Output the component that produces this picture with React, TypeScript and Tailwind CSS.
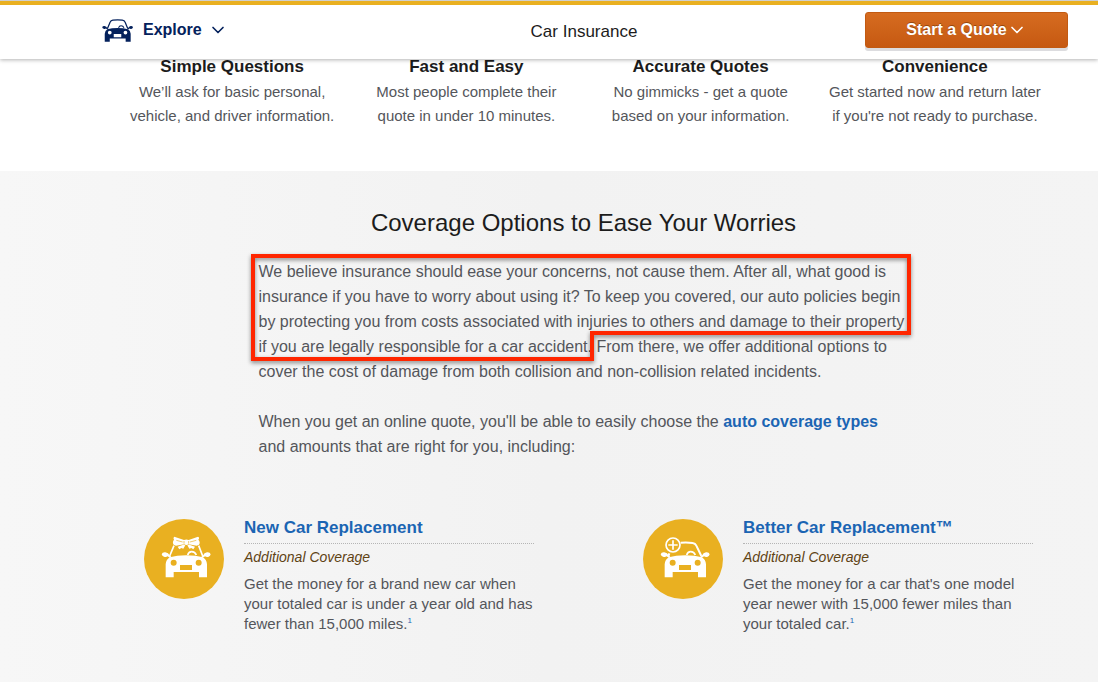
import { ChevronDown } from 'lucide-react';

const features = [
  {
    title: 'Simple Questions',
    lines: ['We’ll ask for basic personal,', 'vehicle, and driver information.'],
  },
  {
    title: 'Fast and Easy',
    lines: ['Most people complete their', 'quote in under 10 minutes.'],
  },
  {
    title: 'Accurate Quotes',
    lines: ['No gimmicks - get a quote', 'based on your information.'],
  },
  {
    title: 'Convenience',
    lines: ['Get started now and return later', "if you're not ready to purchase."],
  },
];

// Front of the car without the roof; lights and plate are cut out.
function CarFront() {
  return (
    <>
      <path
        fillRule="evenodd"
        fill="currentColor"
        d="M65 175V136Q66 121 78 115Q98 109 127 109Q156 109 176 115Q188 121 189 136V175H165V159H89V175ZM80 131a9 9 0 1 0 18 0a9 9 0 1 0 -18 0ZM155 131a9 9 0 1 0 18 0a9 9 0 1 0 -18 0ZM108 138V153H144V138Z"
      />
      <path
        fill="currentColor"
        d="M53 106Q55 99 64 100Q74 102 76 108L82 113L78 117L71 112Q66 115 60 113Q54 111 53 106ZM200 106Q198 99 189 100Q180 102 178 108L172 113L176 117L183 112Q188 115 194 113Q199 111 200 106Z"
      />
      <path
        fill="none"
        stroke="currentColor"
        strokeWidth="5"
        d="M131 108Q134 98 143 98Q153 98 157 108"
      />
    </>
  );
}

function ExploreCarIcon() {
  return (
    <svg viewBox="52 66 148 110" className="h-[23px] w-[31px]" aria-hidden="true">
      <CarFront />
      <path
        fill="none"
        stroke="currentColor"
        strokeWidth="6"
        d="M78 111L91 80Q94 72 104 71Q127 69 149 71Q159 72 162 80L175 111"
      />
    </svg>
  );
}

function BowCarIcon() {
  return (
    <svg viewBox="0 0 240 240" className="size-20 shrink-0 text-white" aria-hidden="true">
      <circle cx="120" cy="120" r="120" fill="#e9b021" />
      <CarFront />
      <path
        fill="none"
        stroke="currentColor"
        strokeWidth="5"
        d="M77 111L90 80M164 80L176 111"
      />
      <path
        fill="currentColor"
        d="M120 63L91 53Q86 56 90 62Q84 70 89 77L96 80L120 76Q127 80 134 76L158 80L165 77Q170 70 163 62Q168 56 162 53L134 63Q127 60 120 63ZM118 77L101 83L106 91L112 87L118 89L124 79ZM136 77L153 83L148 91L142 87L136 89L130 79Z"
      />
      <path
        fill="none"
        stroke="#e9b021"
        strokeWidth="2"
        d="M120 66V74M134 66V74M97 64L116 69M157 64L138 69"
      />
    </svg>
  );
}

function PlusCarIcon() {
  return (
    <svg viewBox="0 0 240 240" className="size-20 shrink-0 text-white" aria-hidden="true">
      <circle cx="120" cy="120" r="120" fill="#e9b021" />
      <CarFront />
      <g fill="none" stroke="currentColor">
        <circle cx="90" cy="78" r="21" strokeWidth="5" />
        <path strokeWidth="5" d="M90 64V92M76 78H104" />
        <path strokeWidth="6" d="M113 71Q133 69 149 72Q157 73 160 80L175 111M79 103L76 112" />
      </g>
    </svg>
  );
}

const coverages = [
  {
    title: 'New Car Replacement',
    icon: <BowCarIcon />,
    lines: [
      'Get the money for a brand new car when',
      'your totaled car is under a year old and has',
      'fewer than 15,000 miles.',
    ],
  },
  {
    title: 'Better Car Replacement™',
    icon: <PlusCarIcon />,
    lines: [
      "Get the money for a car that's one model",
      'year newer with 15,000 fewer miles than',
      'your totaled car.',
    ],
  },
];

function Header() {
  return (
    <header className="sticky top-0 z-10 border-t border-[#cfcfcf] bg-white shadow-[0_1px_4px_rgba(0,0,0,0.3)]">
      <div className="h-1 bg-[#e9b021]" />
      <div className="grid h-[54px] grid-cols-3 items-center pr-[30px] pl-[100px]">
        <button
          type="button"
          className="ml-0.5 flex items-center gap-[10px] justify-self-start pb-1 text-base font-bold text-[#04215c]"
        >
          <ExploreCarIcon />
          Explore
          <ChevronDown size={20} strokeWidth={2} className="-ml-1" />
        </button>
        <p className="text-center text-[17px] text-[#1c1c1c]">Car Insurance</p>
        <button
          type="button"
          className="mb-1 flex h-9 w-[203px] items-center justify-center justify-self-end rounded-[3px] border border-[#c25a12] bg-linear-to-b from-[#d66c20] to-[#c65911] text-base font-bold text-white shadow-[0_3px_0_#dcdcdf] text-shadow-[0_-1px_0_rgba(90,40,0,0.5)]"
        >
          Start a Quote
          <ChevronDown size={20} strokeWidth={2} />
        </button>
      </div>
    </header>
  );
}

function Features() {
  return (
    <section className="pr-[46px] pb-[43px] pl-[115px]">
      <div className="grid grid-cols-4 text-center">
        {features.map((f) => (
          <div key={f.title}>
            <h3 className="pb-[5px] text-[17px] leading-4 font-bold text-[#1c1c1c]">{f.title}</h3>
            <p className="text-[15px] leading-6 whitespace-nowrap text-[#54565b]">
              {f.lines[0]}
              <br />
              {f.lines[1]}
            </p>
          </div>
        ))}
      </div>
    </section>
  );
}

export default function App() {
  return (
    <div className="min-h-screen bg-white font-['Liberation_Sans',Arial,sans-serif]">
      <Header />
      <Features />
      <section className="min-h-[511px] bg-linear-to-r from-[#f7f7f7] via-[#f2f2f2] to-[#f4f4f4] pt-9 pr-[30px] pb-12 pl-[99px]">
        <h2 className="text-center text-2xl leading-8 text-[#1c1c1c]">
          Coverage Options to Ease Your Worries
        </h2>
        <div className="relative mx-auto mt-5 w-[650px] text-base leading-[25px] whitespace-nowrap text-[#54565b]">
          <p>
            We believe insurance should ease your concerns, not cause them. After all, what good is
            <br />
            insurance if you have to worry about using it? To keep you covered, our auto policies begin
            <br />
            by protecting you from costs associated with injuries to others and damage to their property
            <br />
            if you are legally responsible for a car accident. From there, we offer additional options to
            <br />
            cover the cost of damage from both collision and non-collision related incidents.
          </p>
          <p className="mt-[25px]">
            When you get an online quote, you'll be able to easily choose the{' '}
            <a href="#coverage-types" className="font-bold text-[#1b65b3]">
              auto coverage types
            </a>
            <br />
            and amounts that are right for you, including:
          </p>
          {/* highlight around the first sentences */}
          <svg
            viewBox="0 0 670 116"
            className="pointer-events-none absolute -top-2 -left-3 h-[116px] w-[670px] drop-shadow-[0_2px_2px_rgba(0,0,0,0.45)]"
            aria-hidden="true"
          >
            <path
              d="M6 5H662V82H345V108H6Z"
              fill="none"
              stroke="#ff2600"
              strokeWidth="4"
            />
          </svg>
        </div>
        <div className="mt-[58px] grid grid-cols-2 gap-[109px] pr-[35px] pl-[45px]">
          {coverages.map((c) => (
            <article key={c.title} className="flex gap-5 pt-0.5">
              {c.icon}
              <div className="flex-1">
                <h3 className="border-b border-dotted border-[#b5b5b5] pb-1.5 text-[17px] leading-[18px] font-bold text-[#1b65b3]">
                  <a href="#replacement">{c.title}</a>
                </h3>
                <p className="mt-[3px] text-sm leading-5 text-[#5f4314] italic">Additional Coverage</p>
                <p className="mt-[7px] text-[15px] leading-5 whitespace-nowrap text-[#54565b]">
                  {c.lines[0]}
                  <br />
                  {c.lines[1]}
                  <br />
                  {c.lines[2]}
                  <sup>
                    <a href="#footnote" className="text-[8px] text-[#1b65b3]">
                      1
                    </a>
                  </sup>
                </p>
              </div>
            </article>
          ))}
        </div>
      </section>
    </div>
  );
}
